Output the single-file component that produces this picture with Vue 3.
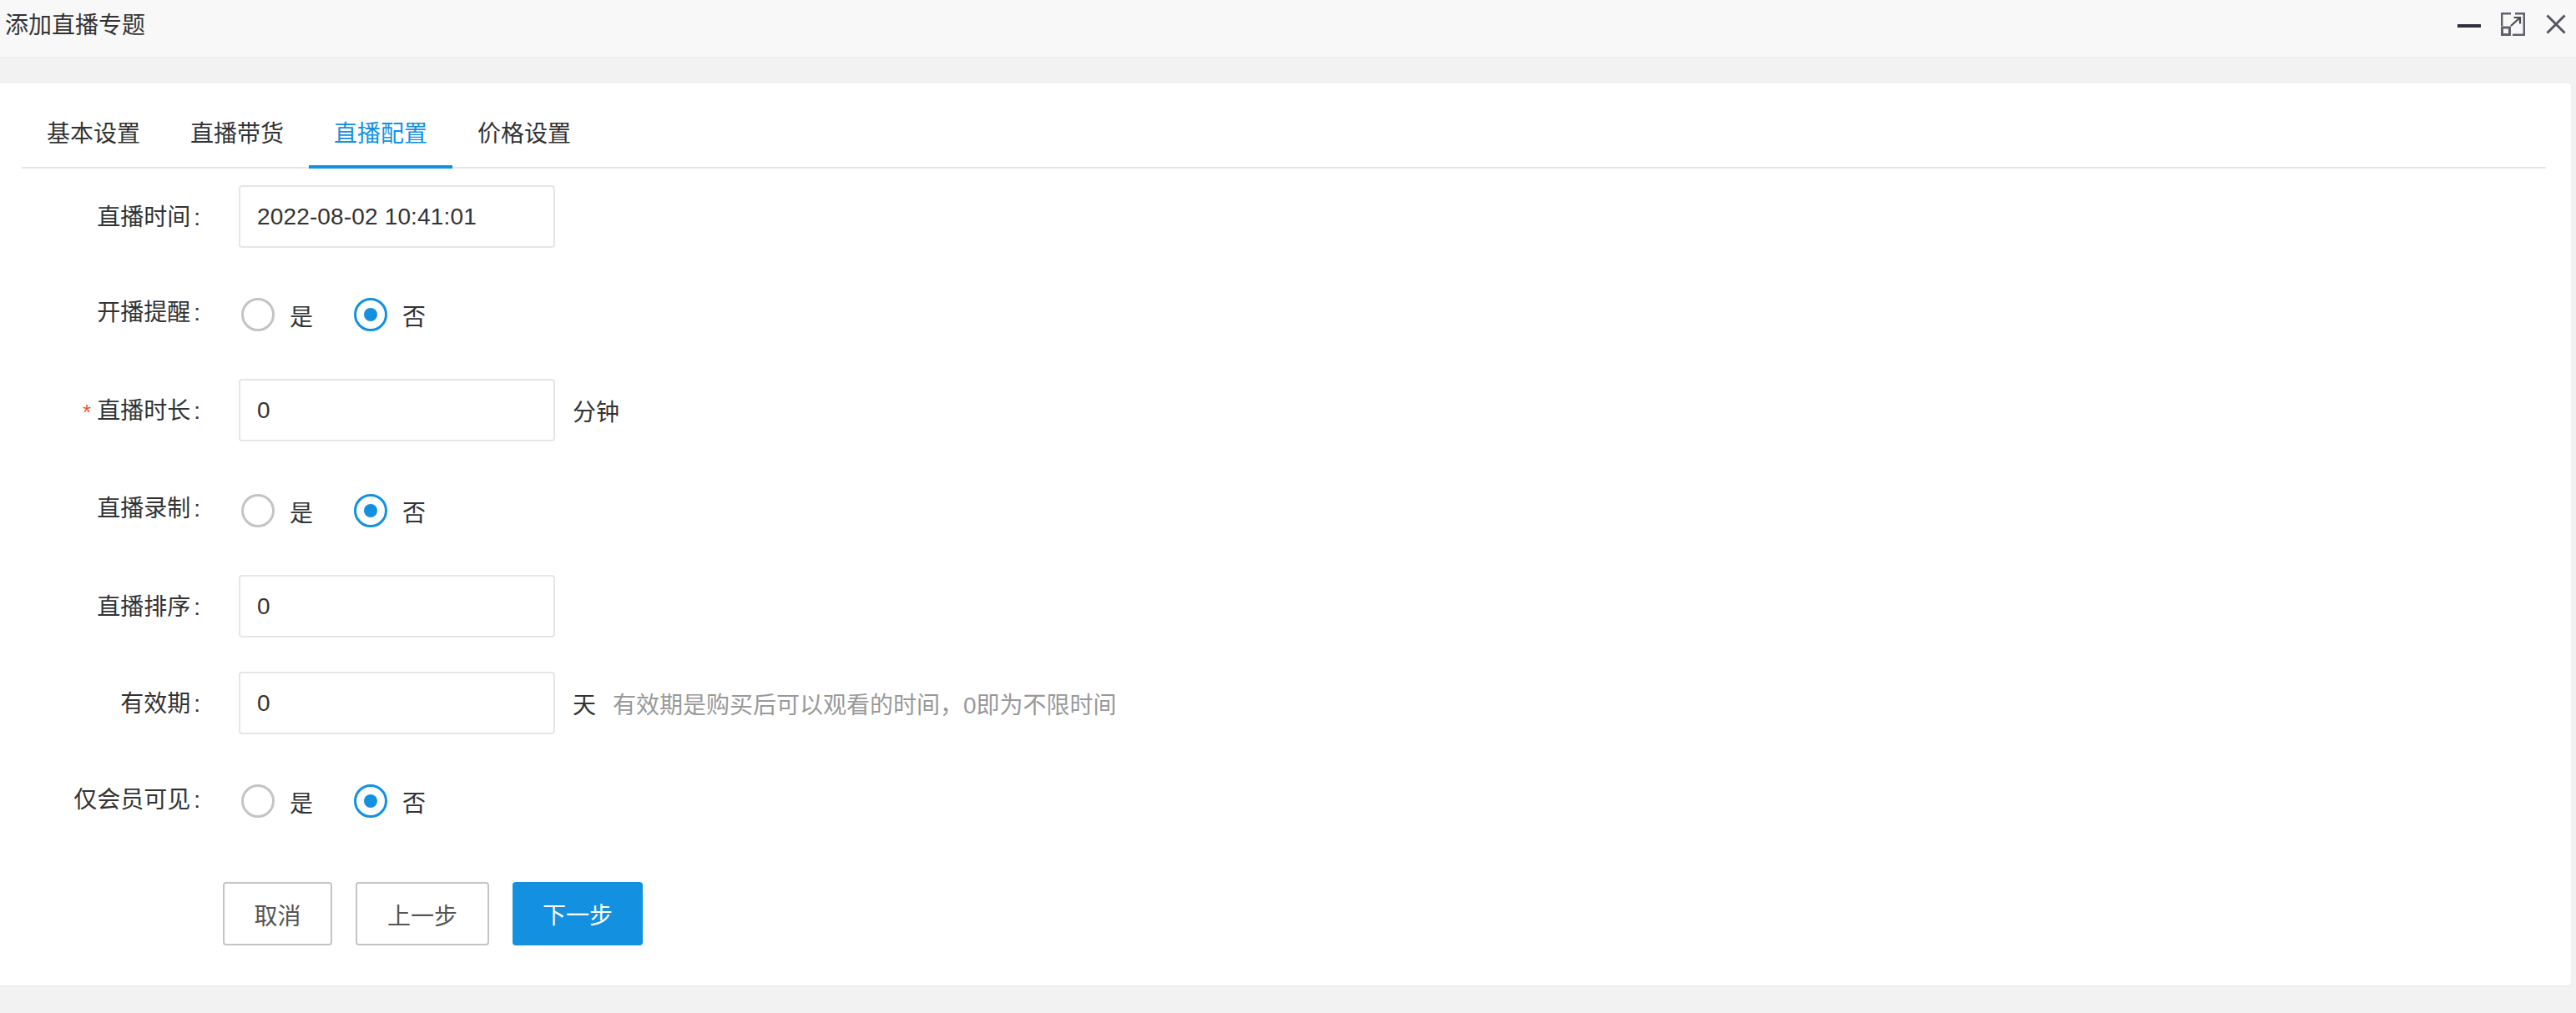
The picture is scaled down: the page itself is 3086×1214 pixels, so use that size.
<script setup>
import { ref } from 'vue';

const tabs = ['基本设置', '直播带货', '直播配置', '价格设置'];
const activeTab = ref(2);

const form = ref({
  time: '2022-08-02 10:41:01',
  remind: 0,
  duration: '0',
  record: 0,
  sort: '0',
  valid: '0',
  vipOnly: 0
});
</script>

<template>
  <div class="page">
    <header class="title-bar">
      <span class="title">添加直播专题</span>
      <div class="win-actions">
        <svg class="icon-min" width="28" height="4" viewBox="0 0 28 4"><rect width="28" height="4" fill="#2f2d3f" /></svg>
        <svg class="icon-max" width="29" height="28" viewBox="0 0 29 28" fill="none" stroke="#62626e" stroke-width="2.500">
          <path d="M12 1.200H1.200v15M17 1.200h10.800v25.600H14" />
          <rect x="1.500" y="18" width="9" height="8.500" stroke-width="3" />
          <path d="M12 16L23 6M15.500 6h7.500v7.500" stroke="#4a4a55" stroke-width="2.200" />
        </svg>
        <svg class="icon-close" width="24" height="24" viewBox="0 0 24 24" fill="none" stroke="#565663" stroke-width="3">
          <path d="M1.500 1.500l21 21M22.500 1.500l-21 21" />
        </svg>
      </div>
    </header>

    <main class="card">
      <nav class="tabs">
        <div
          v-for="(tab, i) in tabs"
          :key="tab"
          :class="['tab', { active: i === activeTab }]"
          @click="activeTab = i"
        >{{ tab }}</div>
      </nav>

      <form class="form" @submit.prevent>
        <div class="form-row">
          <label class="form-label">直播时间<span class="colon">:</span></label>
          <input v-model="form.time" class="input" />
        </div>

        <div class="form-row radio-row">
          <label class="form-label">开播提醒<span class="colon">:</span></label>
          <div class="radio-group">
            <div class="radio" :class="{ checked: form.remind === 1 }" @click="form.remind = 1"><i></i><span>是</span></div>
            <div class="radio" :class="{ checked: form.remind === 0 }" @click="form.remind = 0"><i></i><span>否</span></div>
          </div>
        </div>

        <div class="form-row">
          <label class="form-label"><em>*</em>直播时长<span class="colon">:</span></label>
          <input v-model="form.duration" class="input" />
          <span class="suffix">分钟</span>
        </div>

        <div class="form-row radio-row low">
          <label class="form-label">直播录制<span class="colon">:</span></label>
          <div class="radio-group">
            <div class="radio" :class="{ checked: form.record === 1 }" @click="form.record = 1"><i></i><span>是</span></div>
            <div class="radio" :class="{ checked: form.record === 0 }" @click="form.record = 0"><i></i><span>否</span></div>
          </div>
        </div>

        <div class="form-row">
          <label class="form-label">直播排序<span class="colon">:</span></label>
          <input v-model="form.sort" class="input" />
        </div>

        <div class="form-row">
          <label class="form-label">有效期<span class="colon">:</span></label>
          <input v-model="form.valid" class="input" />
          <span class="suffix">天</span>
          <span class="hint">有效期是购买后可以观看的时间，0即为不限时间</span>
        </div>

        <div class="form-row radio-row tall">
          <label class="form-label">仅会员可见<span class="colon">:</span></label>
          <div class="radio-group">
            <div class="radio" :class="{ checked: form.vipOnly === 1 }" @click="form.vipOnly = 1"><i></i><span>是</span></div>
            <div class="radio" :class="{ checked: form.vipOnly === 0 }" @click="form.vipOnly = 0"><i></i><span>否</span></div>
          </div>
        </div>

        <div class="form-actions">
          <button type="button" class="btn cancel">取消</button>
          <button type="button" class="btn prev">上一步</button>
          <button type="button" class="btn primary">下一步</button>
        </div>
      </form>
    </main>
  </div>
</template>

<style>
html, body {
  margin: 0;
  background: #f2f2f2;
}
</style>

<style scoped>
.page {
  width: 3086px;
  height: 1214px;
  background: #f2f2f2;
  font-family: "Liberation Sans", "Noto Sans CJK SC", sans-serif;
  font-size: 28px;
  color: #333;
  overflow: hidden;
}

.title-bar {
  display: flex;
  align-items: center;
  justify-content: space-between;
  height: 70px;
  padding: 0 12px 10px 6px;
  box-sizing: border-box;
  background: #f8f8f8;
  border-bottom: 2px solid #f0f0f0;
}

.title {
  margin-bottom: 2px;
}

.win-actions {
  display: flex;
  align-items: center;
}

.icon-min {
  margin: 4px 24px 0 0;
}

.icon-max {
  margin-right: 25px;
}

.card {
  width: 3080px;
  height: 1081px;
  margin-top: 30px;
  padding-top: 32px;
  box-sizing: border-box;
  background: #fff;
  border-radius: 0 4px 4px 0;
  box-shadow: 0 1px 2px rgba(0, 0, 0, 0.05);
}

.tabs {
  display: flex;
  height: 68px;
  margin: 0 30px 0 26px;
  border-bottom: 2px solid #e6e6e6;
}

.tab {
  width: 172px;
  height: 70px;
  line-height: 58px;
  text-align: center;
  box-sizing: border-box;
  cursor: pointer;
}

.tab.active {
  color: #1391e0;
  border-bottom: 4px solid #1391e0;
}

.form {
  padding-top: 20px;
}

.form-row {
  display: flex;
  align-items: center;
  height: 75px;
  margin-bottom: 41px;
}

.form-row.low {
  height: 78px;
  padding-top: 3px;
  box-sizing: border-box;
}

.form-row.tall {
  height: 78px;
}

.form-label {
  width: 240px;
  margin-right: 46px;
  padding-bottom: 4px;
  text-align: right;
  flex-shrink: 0;
}

.radio-row .form-label {
  padding-bottom: 8px;
}

.colon {
  margin-left: 4px;
}

.form-label em {
  margin-right: 7px;
  font-style: normal;
  font-size: 26px;
  color: #f5532d;
  vertical-align: -1px;
}

.input {
  width: 379px;
  height: 75px;
  padding: 0 20px;
  box-sizing: border-box;
  border: 2px solid #e6e6e6;
  border-radius: 4px;
  outline: none;
  font: inherit;
  letter-spacing: 0.15px;
  color: inherit;
  background: #fff;
}

.suffix {
  margin-left: 21px;
}

.hint {
  margin-left: 20px;
  color: #999;
}

.radio-group {
  display: flex;
  align-items: center;
  padding-top: 2px;
  margin-left: 3px;
}

.form-row.tall .radio-group {
  padding-top: 0;
}

.radio {
  display: flex;
  align-items: center;
  width: 135px;
  cursor: pointer;
}

.radio span {
  padding-top: 2px;
}

.radio i {
  position: relative;
  width: 40px;
  height: 40px;
  margin-right: 18px;
  box-sizing: border-box;
  border: 3px solid #c4c4c4;
  border-radius: 50%;
}

.radio.checked i {
  border-color: #1391e0;
}

.radio.checked i::after {
  content: '';
  position: absolute;
  left: 9px;
  top: 9px;
  width: 16px;
  height: 16px;
  border-radius: 50%;
  background: #1391e0;
}

.form-actions {
  display: flex;
  padding: 17px 0 0 267px;
  gap: 28px;
}

.btn {
  height: 76px;
  padding: 2px 0 0;
  box-sizing: border-box;
  border: 2px solid #c4c4c4;
  border-radius: 4px;
  background: #fff;
  font: inherit;
  color: #555;
  cursor: pointer;
}

.btn.cancel {
  width: 131px;
}

.btn.prev {
  width: 160px;
}

.btn.primary {
  width: 156px;
  padding-top: 0;
  border-color: #1391e0;
  background: #1391e0;
  color: #fff;
}
</style>
